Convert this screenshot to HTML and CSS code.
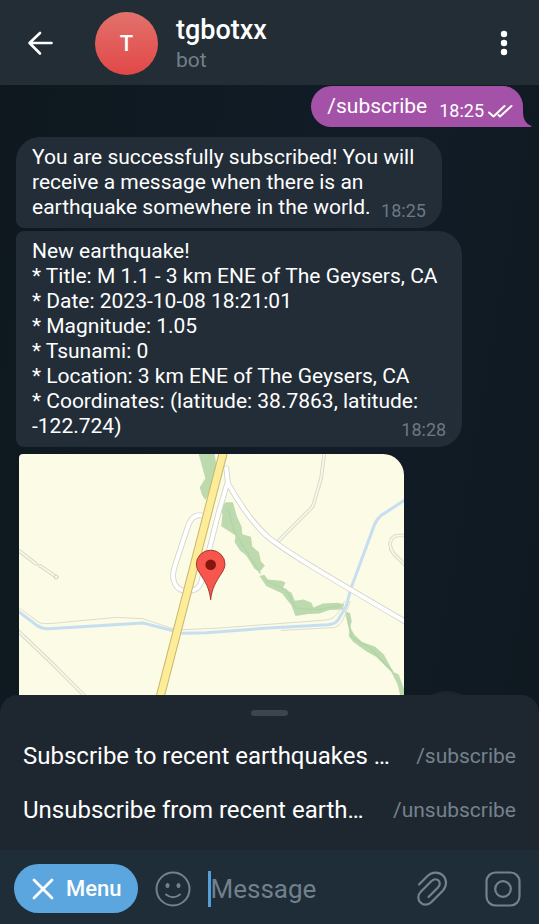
FILE: index.html
```html
<!DOCTYPE html>
<html lang="en">
<head>
<meta charset="utf-8">
<meta name="viewport" content="width=device-width, initial-scale=1">
<title>tgbotxx</title>
<link rel="stylesheet" href="styles.css">
</head>
<body>
<header class="header">
  <button class="icon-button" aria-label="Back">
    <svg width="28" height="28" viewBox="0 0 28 28" fill="none" stroke="#fff" stroke-width="2.6" stroke-linecap="round" stroke-linejoin="round"><path d="M25.500 13H3.500M14 3 3.500 13 14 23.500"/></svg>
  </button>
  <div class="avatar">T</div>
  <div class="peer">
    <h1 class="peer-name">tgbotxx</h1>
    <p class="peer-status">bot</p>
  </div>
  <button class="icon-button" aria-label="More options">
    <svg width="28" height="28" viewBox="0 0 28 28" fill="#fff"><circle cx="14" cy="4" r="3.200"/><circle cx="14" cy="13" r="3.200"/><circle cx="14" cy="22" r="3.200"/></svg>
  </button>
</header>

<main class="chat">
  <div class="bubble outgoing">
    <span>/subscribe</span>
    <time class="time">18:25</time>
    <svg class="checks" width="26" height="16" viewBox="0 0 26 16" fill="none" stroke="#fff" stroke-width="2" stroke-linecap="round" stroke-linejoin="round"><path d="M2 9.500 6.500 13.500 17.500 3M11.500 12 13 13.500 24.500 3"/></svg>
    <svg class="tail" width="10" height="20" viewBox="14 0 10 20" fill="#a452a8"><path d="M14 0H15V5C15 12 18 17 23.500 19Q24 20 22 20H14Z"/></svg>
  </div>
  <div class="bubble incoming first">You are successfully subscribed! You will receive a message when there is an <span class="nowrap">earthquake somewhere in the world.</span> <time class="time">18:25</time></div>
  <div class="bubble incoming">New earthquake!<br>
    * Title: M 1.1 - 3 km ENE of The Geysers, CA<br>
    * Date: 2023-10-08 18:21:01<br>
    * Magnitude: 1.05<br>
    * Tsunami: 0<br>
    * Location: 3 km ENE of The Geysers, CA<br>
    * Coordinates: (latitude: 38.7863, latitude: <span class="nowrap">-122.724)</span> <time class="time">18:28</time></div>
  <svg class="map" viewBox="57 27 1158 780" role="img" aria-label="Map of the epicentre" fill="none" stroke-linejoin="round" stroke-linecap="round">
    <path fill="#fbfbe6" d="M57 27H1215V807H57Z"/>
    <!-- woodland -->
    <g fill="#bddaae">
      <path d="M597 27H645L650 60 636 130 617 165 607 150 600 128 617 100Z"/>
      <path d="M664 180 680 172 700 172 712 215 726 245 728 268 754 276 758 305 778 322 784 350 796 362 780 382 765 372 740 332 722 318 705 292 708 272 665 244 668 210Z"/>
      <path d="M780 394 794 390 805 404 846 408 858 414 850 430 876 444 886 468 912 464 936 474 942 488 970 476 1012 474 1034 478 1030 494 990 496 960 506 925 508 888 514 876 482 848 446 800 424Z"/>
      <path d="M1036 500 1052 505 1057 530 1052 548 1066 572 1088 592 1128 606 1154 630 1182 682 1198 690 1215 735 1215 807 1195 720 1176 682 1130 636 1098 618 1062 592 1048 574 1050 560Z"/>
    </g>
    <path stroke="#b2d4a8" stroke-width="4" d="M684 190 706 265 760 350 782 385M800 408 860 435 888 490 955 495 1030 482M1045 520 1058 578 1110 608 1180 680"/>
    <!-- tracks -->
    <g stroke="#d5d5c9" stroke-width="11">
      <path d="M975 20 965 100 940 185 833 292M57 318 108 357M120 363 167 395M50 555 145 645 255 755"/>
      <path d="M1225 272 1195 272C1172 275 1165 302 1182 325L1220 363"/>
    </g>
    <g stroke="#f7f7e6" stroke-width="6">
      <path d="M975 20 965 100 940 185 833 292M57 318 108 357M120 363 167 395M50 555 145 645 255 755"/>
      <path d="M1225 272 1195 272C1172 275 1165 302 1182 325L1220 363"/>
    </g>
    <!-- canal -->
    <path stroke="#dcdccf" stroke-width="3" d="M50 484 115 532C130 540 150 537 200 532L350 518 430 522 530 556 660 550 980 526C1010 522 1015 505 1035 470M845 557 1000 549C1025 546 1032 525 1052 470"/>
    <path stroke="#c7def0" stroke-width="9" d="M1220 163 1145 212Q1130 225 1124 243L1055 430 1040 485 1016 525Q1008 538 985 540L820 549 620 564 550 566 430 535 145 552Q125 553 108 540L50 496"/>
    <!-- roads -->
    <g>
      <path stroke="#d2d2cb" stroke-width="17" d="M680 70 685 115C710 160 745 220 800 272 850 315 960 380 1220 532M683 115 655 210 630 310 604 415M606 212C580 207 570 228 562 252L525 365C515 395 520 430 550 437 580 441 596 435 604 412"/>
      <path stroke="#fff" stroke-width="12" d="M680 70 685 115C710 160 745 220 800 272 850 315 960 380 1220 532M683 115 655 210 630 310 604 415M606 212C580 207 570 228 562 252L525 365C515 395 520 430 550 437 580 441 596 435 604 412"/>
    </g>
    <path stroke="#c9b66c" stroke-width="27" d="M680 -12 458 847"/>
    <path stroke="#fdec98" stroke-width="21" d="M680 -12 458 847"/>
    <circle cx="169" cy="397" r="6" fill="#fbfbe6" stroke="#cfcfc3" stroke-width="3"/>
    <!-- marker -->
    <path fill="#f6564c" stroke="#9e3a33" stroke-width="3" d="M633 464C629 430 617 411 602 388 593 374 590 367 590 358A43 42 0 0 1 676 358C676 367 673 374 664 388 649 411 637 430 633 464Z"/>
    <circle cx="633" cy="360" r="16" fill="#84160f"/>
  </svg>
  <button class="scroll-down" aria-label="Scroll to bottom"></button>
</main>

<section class="commands" aria-label="Bot commands">
  <div class="handle"></div>
  <button class="command"><span class="command-title">Subscribe to recent earthquakes …</span><span class="command-name">/subscribe</span></button>
  <button class="command"><span class="command-title">Unsubscribe from recent earth…</span><span class="command-name">/unsubscribe</span></button>
</section>

<footer class="composer">
  <button class="menu">
    <svg width="22" height="22" viewBox="0 0 22 22" stroke="#fff" stroke-width="2.800" stroke-linecap="round"><path d="M2 2 20 20M20 2 2 20"/></svg>
    Menu
  </button>
  <button class="tool" aria-label="Emoji">
    <svg width="36" height="36" viewBox="0 0 36 36" fill="none" stroke="#74828e" stroke-width="2" stroke-linecap="round"><circle cx="18" cy="18" r="16.500"/><path d="M11 23.500Q18 29 25 23.500"/><g fill="#74828e" stroke="none"><ellipse cx="12.500" cy="14.500" rx="2" ry="2.500"/><ellipse cx="23.500" cy="14.500" rx="2" ry="2.500"/></g></svg>
  </button>
  <input class="message-input" type="text" placeholder="Message" aria-label="Message">
  <button class="tool" aria-label="Attach">
    <svg width="36" height="36" viewBox="0 0 36 36" fill="none" stroke="#74828e" stroke-width="2.200" stroke-linecap="round"><path d="M5 13.500 13.500 5C18 .500 25 .500 29 4.500S33 15 29 19.500L17.500 31C14 34.500 9.500 34.500 6.500 31.500S3.500 24 7 20.500L17.500 10C20 7.500 23 8 24.500 9.500S26.500 14 24 16.500L14.500 26"/></svg>
  </button>
  <button class="tool" aria-label="Record video">
    <svg width="36" height="36" viewBox="0 0 36 36" fill="none" stroke="#74828e" stroke-width="2.200"><rect x="1.500" y="1.500" width="33" height="33" rx="9"/><circle cx="18" cy="18" r="7.800"/></svg>
  </button>
</footer>
</body>
</html>
```
FILE: styles.css
```css
* {
  box-sizing: border-box;
}

body {
  margin: 0;
  height: 100vh;
  display: flex;
  flex-direction: column;
  background: #1e272f;
  color: #fff;
  font-family: Roboto, sans-serif;
  font-size: 21px;
  line-height: 25px;
}

button {
  border: 0;
  padding: 0;
  background: none;
  color: inherit;
  font: inherit;
}

svg {
  display: block;
}

.header {
  display: flex;
  align-items: center;
  padding: 12px 21px 10px 26px;
  background: #232d35;
}

.avatar {
  width: 63px;
  height: 63px;
  margin: 0 18px 0 41px;
  border-radius: 50%;
  display: grid;
  place-items: center;
  background: linear-gradient(#e2726c, #e14848);
  font-size: 22px;
  font-weight: 500;
}

.peer {
  flex: 1;
}

.peer-name,
.peer-status {
  margin: 0;
}

.peer-name {
  font-size: 27px;
  font-weight: 500;
  line-height: 32px;
}

.peer-status {
  color: #70808b;
  line-height: 28px;
}

.chat {
  position: relative;
  flex: 1;
  min-height: 0;
  overflow: hidden;
  display: flex;
  flex-direction: column;
  align-items: flex-start;
  gap: 3px;
  padding: 1px 16px 0;
  background: linear-gradient(100deg, #0e181e, #121c27 60%, #0f1920);
}

.bubble {
  padding: 8px 16px;
}

.incoming {
  display: flow-root;
  max-width: 88%;
  padding-bottom: 7px;
  border-radius: 8px 24px 24px 8px;
  background: #222d38;
}

.first {
  max-width: 84%;
  border-top-left-radius: 24px;
}

.nowrap {
  white-space: nowrap;
}

.time {
  font-size: 18px;
  line-height: 21px;
}

.incoming .time {
  float: right;
  margin-top: 5px;
  color: #6b7883;
}

.outgoing {
  position: relative;
  align-self: flex-end;
  display: flex;
  margin-bottom: 7px;
  padding-right: 10px;
  border-radius: 21px 21px 0 21px;
  background: #a452a8;
}

.outgoing .time {
  margin: 6px 3px -2px 12px;
}

.checks {
  margin-top: 9px;
}

.tail {
  position: absolute;
  right: -9px;
  bottom: 0;
}

.map {
  width: 76%;
  margin: 4px 3px 0;
  flex-shrink: 0;
  border-radius: 4px 21px 0 0;
}

.scroll-down {
  position: absolute;
  right: 62px;
  bottom: -38px;
  width: 60px;
  height: 60px;
  border-radius: 50%;
  background: #1c252d;
}

.commands {
  position: relative;
  margin-top: -18px;
  padding: 15px 23px 13px;
  border-radius: 18px 18px 0 0;
  background: #1e272f;
}

.handle {
  width: 37px;
  height: 6px;
  margin: 0 auto 13px;
  border-radius: 3px;
  background: #3b454e;
}

.command {
  display: flex;
  align-items: center;
  justify-content: space-between;
  width: 100%;
  height: 54px;
}

.command-title {
  font-size: 24px;
}

.command-name {
  color: #74828c;
}

.composer {
  display: flex;
  align-items: center;
  gap: 17px;
  padding: 14px 18px 11px 14px;
  background: #1e2d37;
}

.menu {
  display: flex;
  align-items: center;
  gap: 12px;
  height: 49px;
  padding: 0 16px 0 18px;
  border-radius: 25px;
  background: #5ba6de;
  font-size: 22px;
  font-weight: 500;
}

.message-input {
  flex: 1;
  min-width: 0;
  height: 36px;
  padding: 0;
  border: 0;
  border-left: 3px solid #569fd6;
  outline: 0;
  background: none;
  color: #fff;
  font: inherit;
  font-size: 26px;
}

.message-input::placeholder {
  color: #72808c;
  opacity: 1;
}

.tool:nth-last-child(2) {
  margin-right: 18px;
}
```
